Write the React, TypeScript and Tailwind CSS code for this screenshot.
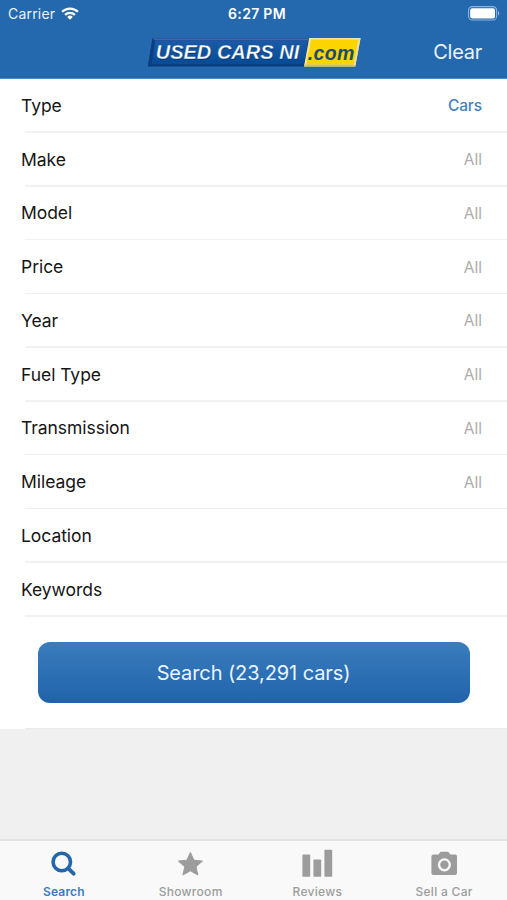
import { useState } from "react";
import type { ReactNode } from "react";
import clsx from "clsx";

interface Filter {
  label: string;
  value?: string;
  active?: boolean;
}

interface Tab {
  label: string;
  icon: ReactNode;
}

const filters: Filter[] = [
  { label: "Type", value: "Cars", active: true },
  { label: "Make", value: "All" },
  { label: "Model", value: "All" },
  { label: "Price", value: "All" },
  { label: "Year", value: "All" },
  { label: "Fuel Type", value: "All" },
  { label: "Transmission", value: "All" },
  { label: "Mileage", value: "All" },
  { label: "Location" },
  { label: "Keywords" },
];

const tabs: Tab[] = [
  {
    label: "Search",
    icon: (
      <svg width="32" height="32" viewBox="0 0 32 32" fill="none" stroke="currentColor">
        <circle cx="14.8" cy="14" r="8.7" strokeWidth="3.6" />
        <path d="M21.2 20.4 26.6 25.6" strokeWidth="4" strokeLinecap="round" />
      </svg>
    ),
  },
  {
    label: "Showroom",
    icon: (
      <svg width="32" height="32" viewBox="0 0 32 32" fill="currentColor" stroke="currentColor" strokeLinejoin="round">
        <path d="M16.4 4.4 19.9 12.2 28.4 13.1 22 18.8 23.9 27 16.4 22.8 8.9 27 10.8 18.8 4.4 13.1 12.9 12.2Z" />
      </svg>
    ),
  },
  {
    label: "Reviews",
    icon: (
      <svg width="32" height="32" viewBox="0 0 32 32" fill="currentColor">
        <rect x="1.4" y="6.6" width="7.8" height="22.2" rx="0.8" />
        <rect x="12.4" y="11.4" width="7.8" height="17.4" rx="0.8" />
        <rect x="23.4" y="1.8" width="7.8" height="27" rx="0.8" />
      </svg>
    ),
  },
  {
    label: "Sell a Car",
    icon: (
      <svg width="32" height="32" viewBox="0 0 32 32">
        <path
          d="M5.4 6.4h5L12.6 3.8h7.6l2.2 2.6h4.8a1.8 1.8 0 0 1 1.8 1.8V25a2 2 0 0 1-2 2H5.4a2 2 0 0 1-2-2V8.4a2 2 0 0 1 2-2Z"
          fill="currentColor"
        />
        <circle cx="16.4" cy="16.8" r="5.4" fill="none" stroke="#f9f9f9" strokeWidth="2.4" />
      </svg>
    ),
  },
];

function StatusBar() {
  return (
    <div className="grid h-[27px] grid-cols-3 items-center pl-2 pr-[7px] text-white">
      <div className="flex items-center gap-[7px]">
        <span className="text-[14px] tracking-[0.2px] text-[#eaf4ff]">Carrier</span>
        <svg className="-ml-px" width="18" height="13" viewBox="0 0 18 13" fill="none" stroke="currentColor" strokeWidth="2.3">
          <path d="M1.1 4.8a11.3 11.3 0 0 1 15.8 0" />
          <path d="M4.1 7.9a7 7 0 0 1 9.8 0" />
          <path d="M9 12.7 6.2 9.9a4 4 0 0 1 5.6 0Z" fill="currentColor" stroke="none" />
        </svg>
      </div>
      <span className="pl-[6px] text-center text-[14px] font-semibold tracking-[0.3px]">6:27 PM</span>
      <svg className="justify-self-end" width="32" height="15" viewBox="0 0 32 15">
        <rect x="0.6" y="0.6" width="28" height="13.4" rx="3.6" fill="none" stroke="#8db4dc" strokeWidth="1.1" />
        <rect x="2.2" y="2.2" width="24.8" height="10.2" rx="2" fill="#fff" />
        <path d="M30 5v4.6c1.7-.5 1.7-4.1 0-4.6Z" fill="#8db4dc" />
      </svg>
    </div>
  );
}

function Logo() {
  return (
    <svg width="214" height="31" viewBox="0 0 214 31">
      <defs>
        <linearGradient id="plate" x1="0" y1="0" x2="0" y2="1">
          <stop offset="0" stopColor="#1b5aa6" />
          <stop offset="1" stopColor="#064b96" />
        </linearGradient>
      </defs>
      <path d="M5.5 1.4H162l-5 28H1Z" fill="#073b7c" />
      <path d="M5.5 1.4H162l-.4 2H7Z" fill="#4c62ac" />
      <path d="M8 3.4h153l-4 23.8H4.3Z" fill="url(#plate)" />
      <path d="M5.5 1.4 8 3.4 4.3 27.2 1 29.4Z" fill="#0b3f82" />
      <path d="M162.2 1H213.6l-5.4 28.6H157Z" fill="#f3e39a" />
      <path d="M164.2 2.8h47.2l-4.8 24.6H159.4Z" fill="#fcd401" />
      <path d="M213.6 1 208.2 29.6 206.6 27.4 211.4 2.8Z" fill="#f0df93" />
      <path d="M159.4 27.4h47.2l1.6 2.2H157Z" fill="#dcc04a" />
      <g fontFamily="Liberation Sans, Arial, sans-serif" fontWeight="700" fontStyle="italic">
        <text x="9.3" y="22.9" fontSize="20" fill="#06366f" textLength="143.5" lengthAdjust="spacing">
          USED CARS NI
        </text>
        <text
          x="8.7"
          y="22.2"
          fontSize="20"
          fill="#fff"
          stroke="#0b4f9b"
          strokeWidth="0.3"
          textLength="143.5"
          lengthAdjust="spacing"
        >
          USED CARS NI
        </text>
        <text x="160.8" y="22.5" fontSize="19.5" fill="#1c4c6c" textLength="46.5" lengthAdjust="spacing">
          .com
        </text>
      </g>
    </svg>
  );
}

function Header({ onClear }: { onClear: () => void }) {
  return (
    <header className="h-[79px] border-b border-[#4b8bcb] bg-[#2468ae]">
      <StatusBar />
      <div className="grid grid-cols-[1fr_214px_1fr] items-center pt-[10px]">
        <span />
        <Logo />
        <button
          onClick={onClear}
          className="justify-self-end pr-[25px] text-[20px] leading-[31px] tracking-[-0.25px] text-[#eaf4ff]"
        >
          Clear
        </button>
      </div>
    </header>
  );
}

function FilterRow({ label, value, active }: Filter) {
  return (
    <li className="flex h-[53.75px] flex-col">
      <div className="flex flex-1 items-center justify-between pl-[21px] pr-[25px] pt-[1.5px]">
        <span className="text-[17.5px] tracking-[-0.05px] text-[#151515]">{label}</span>
        {value && (
          <span
            className={clsx(
              "text-[15.5px]",
              active ? "font-medium tracking-[-0.1px] text-[#3f7fc0]" : "text-[#acacac]"
            )}
          >
            {value}
          </span>
        )}
      </div>
      <div className="ml-[25px] h-[1.5px] bg-[#f1f1f2]" />
    </li>
  );
}

export default function App() {
  const [items, setItems] = useState(filters);
  const [tab, setTab] = useState("Search");

  const clear = () => setItems(filters);

  return (
    <div className="flex h-[900px] w-[507px] flex-col overflow-hidden bg-[#f0f0f0] font-['Inter','Liberation_Sans',sans-serif]">
      <Header onClear={clear} />

      <main className="flex-1">
        <div className="bg-white">
          <ul>
            {items.map((item) => (
              <FilterRow key={item.label} {...item} />
            ))}
          </ul>
          <div className="px-[37.5px] pt-[25.5px]">
            <button className="h-[60.5px] w-full rounded-[12px] bg-linear-to-b from-[#3a7dbd] to-[#2063aa] pt-px text-[20px] tracking-[-0.1px] text-[#eaf4ff]">
              Search (23,291 cars)
            </button>
          </div>
          <div className="ml-[25px] mt-[25px] h-[1.5px] bg-[#ebebec]" />
        </div>
      </main>

      <nav className="grid h-[61px] grid-cols-4 border-t-2 border-[#e4e4e4] bg-[#f9f9f9]">
        {tabs.map(({ label, icon }) => (
          <button
            key={label}
            onClick={() => setTab(label)}
            className={clsx(
              "flex flex-col items-center pt-[7px]",
              tab === label ? "text-[#2366aa]" : "text-[#9c9c9c]"
            )}
          >
            {icon}
            <span
              className={clsx(
                "mt-1 pl-px text-[12px] leading-[16px]",
                tab === label ? "font-semibold tracking-[0.2px] text-[#3f7cba]" : "font-medium tracking-[0.3px]"
              )}
            >
              {label}
            </span>
          </button>
        ))}
      </nav>
    </div>
  );
}
